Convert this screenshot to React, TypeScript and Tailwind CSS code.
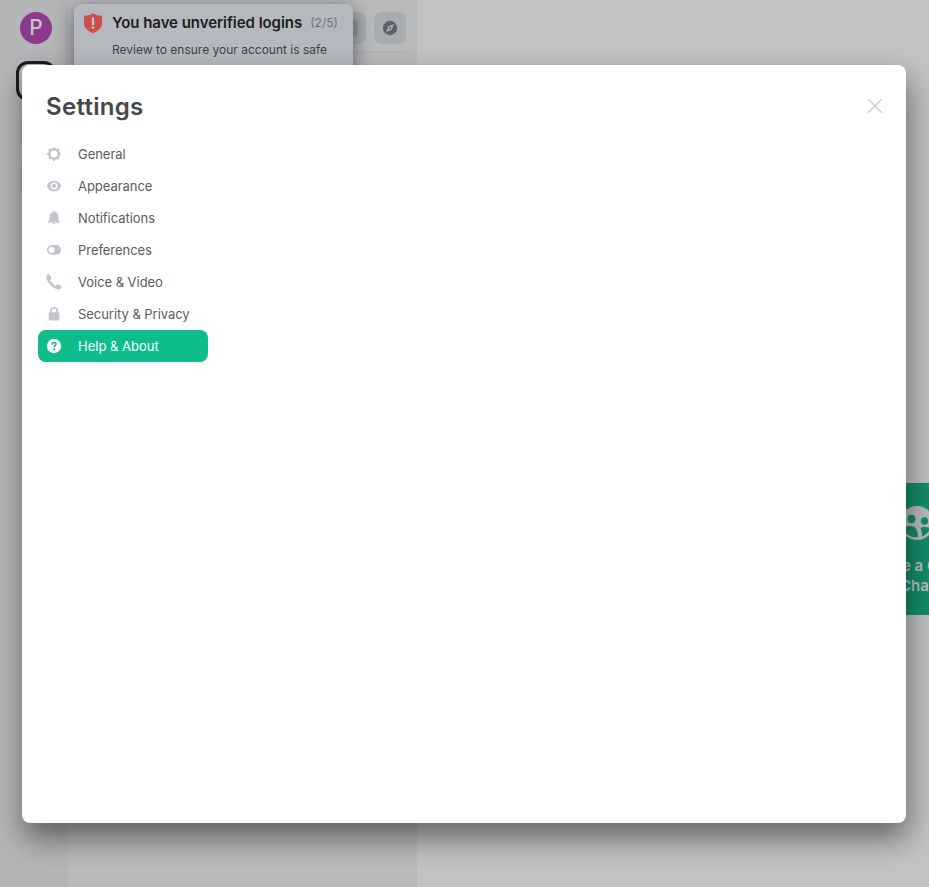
import type { ReactNode } from "react";

const GearIcon = () => (
  <svg width="16" height="16" viewBox="0 0 16 16" fill="currentColor">
    <path
      fillRule="evenodd"
      d="M7.400 1.200Q8 .6 8.600 1.200L9.900 2.700 12.100 2.500Q13.300 2.500 13.400 3.700L13.300 6 14.800 7.400Q15.400 8 14.800 8.600L13.300 10 13.400 12.300Q13.300 13.400 12.100 13.400L9.900 13.300 8.600 14.800Q8 15.400 7.400 14.800L6.100 13.300 3.800 13.400Q2.600 13.400 2.600 12.200L2.700 10 1.200 8.600Q.6 8 1.200 7.400L2.700 6 2.600 3.800Q2.600 2.600 3.800 2.500L6.100 2.700ZM8 4.500A3.500 3.500 0 1 0 8 11.500 3.500 3.500 0 0 0 8 4.500Z"
    />
  </svg>
);

const EyeIcon = () => (
  <svg width="16" height="16" viewBox="0 0 16 16" fill="currentColor">
    <path
      fillRule="evenodd"
      d="M8 2.700C4.300 2.700 1.600 5 .9 8c.7 3 3.400 5.300 7.100 5.300S14.400 11 15.100 8C14.400 5 11.700 2.700 8 2.700ZM8 4.600a3.400 3.400 0 1 1 0 6.800 3.400 3.400 0 0 1 0-6.800Z"
    />
    <circle cx="8" cy="8" r="2" />
  </svg>
);

const BellIcon = () => (
  <svg width="16" height="16" viewBox="0 0 16 16" fill="currentColor">
    <path d="M8 1c.7 0 1.100.5 1.100 1.100C11.400 2.700 12.500 4.500 12.500 6.800v3.300l1.500 1.400c.4.4.2.9-.4.9H2.400c-.6 0-.8-.5-.4-.9l1.500-1.400V6.800c0-2.300 1.100-4.100 3.400-4.700C6.900 1.500 7.300 1 8 1ZM6.500 13h3c0 .8-.6 1.400-1.500 1.400S6.500 13.800 6.500 13Z" />
  </svg>
);

const ToggleIcon = () => (
  <svg width="16" height="16" viewBox="0 0 16 16" fill="currentColor">
    <path
      fillRule="evenodd"
      d="M5.800 3.100h4.400a4.850 4.850 0 0 1 0 9.700H5.800A4.850 4.850 0 0 1 5.800 3.100Zm-.2 1.900a2.950 2.950 0 1 0 0 5.900 2.950 2.950 0 0 0 0-5.900Z"
    />
  </svg>
);

const PhoneIcon = () => (
  <svg width="16" height="16" viewBox="0 0 16 16" fill="currentColor">
    <path d="M.3 2.500C.3 1.300 1.500.3 2.600.3c.7 0 1.200.6 1.600 1.300l1 1.800c.4.8.2 1.400-.5 2l-.8.7c.5 1.400 4.400 5.300 5.800 5.800l.7-.8c.6-.7 1.200-.9 2-.5l1.800 1c.7.4 1.300.9 1.300 1.600 0 1.100-1 2.300-2.200 2.300C7.200 15.500.3 8.600.3 2.500Z" />
  </svg>
);

const LockIcon = () => (
  <svg width="16" height="16" viewBox="0 0 16 16" fill="currentColor">
    <path
      fillRule="evenodd"
      d="M4 6.200V4.900a4 4 0 0 1 8 0v1.300c.9.1 1.400.6 1.400 1.400v5.500c0 .9-.6 1.500-1.500 1.500H4.100c-.9 0-1.500-.6-1.500-1.500V7.600c0-.8.500-1.300 1.400-1.400Zm1.700 0h4.600V4.900a2.300 2.300 0 0 0-4.600 0v1.300Z"
    />
  </svg>
);

const HelpIcon = () => (
  <svg width="16" height="16" viewBox="0 0 16 16">
    <circle cx="8" cy="8" r="7.200" fill="white" />
    <path
      d="M6 6.300c0-1.100.9-1.800 2-1.800s2 .7 2 1.700c0 1.300-1.800 1.400-1.800 2.500"
      fill="none"
      stroke="#0dbd8b"
      strokeWidth="1.500"
      strokeLinecap="round"
    />
    <circle cx="8.200" cy="11.200" r="1" fill="#0dbd8b" />
  </svg>
);

const items: { label: string; icon: ReactNode; active?: boolean }[] = [
  { label: "General", icon: <GearIcon /> },
  { label: "Appearance", icon: <EyeIcon /> },
  { label: "Notifications", icon: <BellIcon /> },
  { label: "Preferences", icon: <ToggleIcon /> },
  { label: "Voice & Video", icon: <PhoneIcon /> },
  { label: "Security & Privacy", icon: <LockIcon /> },
  { label: "Help & About", icon: <HelpIcon />, active: true },
];

function SpacePanel() {
  return (
    <aside className="flex w-[68px] shrink-0 flex-col bg-[#b4b5b7] pl-4 pt-3">
      <div className="ml-1 flex size-8 items-center justify-center rounded-full bg-[#8c388c] pb-px text-[21px] font-medium text-[#c8c5c9]">
        P
      </div>
      <div className="ml-[3px] mt-2 h-px w-[34px] bg-[#aab0b9]" />
      <div className="mt-2 size-10 rounded-xl border-[3px] border-[#1b1d20] bg-[#b4b5b7]" />
      <div className="ml-1 mt-[13px] size-8 rounded-lg bg-[#a8aaad]" />
      <div className="ml-1 mt-4 size-8 rounded-lg bg-[#a8aaad]" />
    </aside>
  );
}

function RoomPanel() {
  return (
    <section className="w-[349px] shrink-0 bg-[#b9babc] px-[11px] pt-3">
      <div className="flex justify-end gap-2">
        <div className="flex size-8 items-center justify-center rounded-lg bg-[#a9acaf]">
          <div className="size-4 rounded bg-[#969a9f]" />
        </div>
        <div className="flex size-8 items-center justify-center rounded-lg bg-[#a9acaf]">
          <svg width="16" height="16" viewBox="0 0 16 16">
            <circle cx="8" cy="8" r="7.200" fill="#5b626d" />
            <path fillRule="evenodd" d="m12 4-2.300 5.700L4 12l2.300-5.700L12 4ZM8 7a1 1 0 1 0 0 2 1 1 0 0 0 0-2Z" fill="#a9acaf" />
          </svg>
        </div>
      </div>
      <div className="mt-2 h-px bg-[#aab0b9]" />
    </section>
  );
}

function HomePanel() {
  return (
    <main className="min-w-0 flex-1 overflow-hidden bg-[#c1c2c4] pt-[483px]">
      <div className="ml-[420px] flex h-[132px] w-40 flex-col items-center bg-[#148d6c] pt-[23px] text-[15px] font-semibold leading-5 text-[#bdc3c2]">
        <svg className="shrink-0" width="34" height="34" viewBox="0 0 34 34">
          <circle cx="17" cy="17" r="17" fill="#b9bbbc" />
          <g fill="#148d6c">
            <ellipse cx="11.500" cy="13" rx="3.900" ry="4.300" />
            <ellipse cx="24.500" cy="15" rx="3.500" ry="3.800" />
            <path d="M3 22.500c2-3 10-3.500 12.500-.5 2.300 2.700 2 5.500 2.500 9-5.500 1-12-1.500-15-8.500ZM20.500 22c2-1.500 7-1.500 10 0-1.500 4-4.500 7-8.500 8.300 0-3.300-.3-5.600-1.500-8.300Z" />
          </g>
        </svg>
        <div className="mt-4 w-[120px] text-center">
          Create a Group
          <br />
          Chat
        </div>
      </div>
    </main>
  );
}

function Toast() {
  return (
    <div className="absolute left-[74px] top-1 flex h-[100px] w-[279px] rounded-lg bg-[#b5b9bf] pl-[10px] pt-2 shadow-[0_4px_20px_rgba(0,0,0,0.5)]">
      <svg className="mt-px shrink-0" width="18" height="21" viewBox="0 0 18 21">
        <path d="M9 .2c2.500 1.600 5.500 2.300 8.200 2.300.5 0 .8.300.8.800v7.200c0 4.500-4 7.700-9 9.700-5-2-9-5.200-9-9.700V3.300c0-.5.300-.8.800-.8C3.500 2.500 6.500 1.800 9 .2Z" fill="#ca504e" />
        <path d="M9 5.500v5.800" stroke="#c9c3c5" strokeWidth="2.300" strokeLinecap="round" />
        <circle cx="9" cy="14.500" r="1.300" fill="#c9c3c5" />
      </svg>
      <div className="ml-[10px] whitespace-nowrap">
        <div className="flex items-center leading-[22px]">
          <span className="text-[15px] font-semibold tracking-[-0.04px] text-[#1b1d20]">You have unverified logins</span>
          <span className="ml-2 text-xs text-[#6b717a]">(2/5)</span>
        </div>
        <div className="mt-[6px] text-xs leading-5 text-[#3c3f44]">
          Review to ensure your account is safe
        </div>
      </div>
    </div>
  );
}

function SettingsDialog() {
  return (
    <div className="absolute left-[22px] top-[65px] h-[758px] w-[884px] rounded-lg bg-white px-4 pt-6 shadow-[2px_15px_30px_0_rgba(0,0,0,0.48)]">
      <header className="flex h-9 items-center justify-between px-2">
        <h1 className="text-2xl font-semibold leading-9 tracking-[0.3px] text-[#45474a]">Settings</h1>
        <svg className="-mr-px mb-[2px]" width="16" height="16" viewBox="0 0 16 16" stroke="#c1c1c1" strokeWidth="1.200">
          <path d="m1.300 1.300 13.400 13.400M14.700 1.300 1.300 14.700" />
        </svg>
      </header>
      <nav className="mt-[13px] w-[170px]">
        {items.map((item) => (
          <div
            key={item.label}
            className={
              item.active
                ? "flex h-8 items-center gap-4 rounded-lg bg-[#0dbd8b] pl-2 text-[13px] text-white"
                : "flex h-8 items-center gap-4 pl-2 text-[13px] tracking-[-0.04px] text-[#5a5c60]"
            }
          >
            <span className={item.active ? "text-white" : "text-[#c1c6cd]"}>{item.icon}</span>
            <span className="pt-[2px]">{item.label}</span>
          </div>
        ))}
      </nav>
    </div>
  );
}

export default function App() {
  return (
    <div className="relative flex h-[887px] w-[929px] overflow-hidden font-['Inter',sans-serif]">
      <SpacePanel />
      <RoomPanel />
      <HomePanel />
      <Toast />
      <SettingsDialog />
    </div>
  );
}
